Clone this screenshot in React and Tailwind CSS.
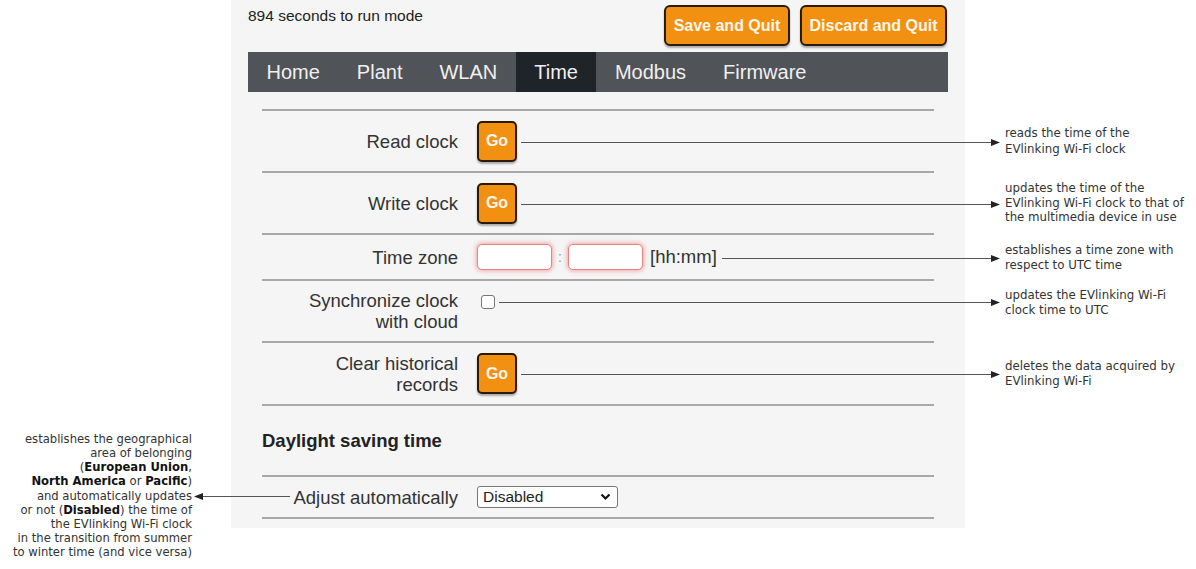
import React from "react";

function Arrow({ cls, left }) {
  return (
    <div className={"absolute flex items-center h-[8px] " + cls}>
      {left && (
        <svg width="9" height="7" viewBox="0 0 9 7" className="shrink-0">
          <polygon points="0,3.5 9,0 9,7" fill="#222" />
        </svg>
      )}
      <div className="flex-1 h-px bg-[#555]" />
      {!left && (
        <svg width="9" height="7" viewBox="0 0 9 7" className="shrink-0">
          <polygon points="9,3.5 0,0 0,7" fill="#222" />
        </svg>
      )}
    </div>
  );
}

function GoButton() {
  return (
    <div className="w-[40px] h-[41px] rounded-[5px] border-2 border-[#2a1a08] bg-[#f29111] shadow-[0_2px_2px_rgba(0,0,0,0.3)] flex items-center justify-center text-[#fff6ea] font-bold text-[16px]">
      Go
    </div>
  );
}

function Row({ h, label, children, alignTop }) {
  return (
    <div className={"flex border-b-2 border-[#a8a8a8] " + h}>
      <div className="w-[204px] pr-[8px] flex items-center justify-end text-right text-[18.5px] leading-[21px] text-[#333]">
        {label}
      </div>
      <div className={"flex-1 pl-[11px] flex " + (alignTop ? "items-start pt-[14px]" : "items-center")}>
        {children}
      </div>
    </div>
  );
}

export default function App() {
  const navItems = ["Home", "Plant", "WLAN", "Time", "Modbus", "Firmware"];
  return (
    <div className="relative w-[1196px] h-[569px] bg-white overflow-hidden font-['Liberation_Sans',Arial,sans-serif]">
      <div className="ml-[231px] w-[734px] h-[528px] bg-[#f5f5f5] px-[17px]">
        <div className="flex justify-between h-[52px]">
          <div className="pt-[7px] text-[15.5px] leading-[18px] text-[#222]">894 seconds to run mode</div>
          <div className="flex gap-[10px] pt-[5px] pr-[1px]">
            <div className="w-[126px] h-[41px] rounded-[6px] border-2 border-[#2a1a08] bg-[#f29111] shadow-[0_2px_2px_rgba(0,0,0,0.3)] flex items-center justify-center text-[#fff6ea] font-bold text-[16px]">
              Save and Quit
            </div>
            <div className="w-[147px] h-[41px] rounded-[6px] border-2 border-[#2a1a08] bg-[#f29111] shadow-[0_2px_2px_rgba(0,0,0,0.3)] flex items-center justify-center text-[#fff6ea] font-bold text-[16px]">
              Discard and Quit
            </div>
          </div>
        </div>
        <div className="h-[40px] bg-[#505358] flex">
          {navItems.map((n) => (
            <div
              key={n}
              className={
                "h-full flex items-center px-[18.5px] text-[20px] text-[#f0f0f0] " +
                (n === "Time" ? "bg-[#1f2428]" : "")
              }
            >
              {n}
            </div>
          ))}
        </div>

        <div className="ml-[14px] w-[672px] mt-[17px]">
          <div className="border-t-2 border-[#a8a8a8]">
            <Row h="h-[62px]" label="Read clock">
              <GoButton />
            </Row>
            <Row h="h-[62px]" label="Write clock">
              <GoButton />
            </Row>
            <Row h="h-[46px]" label="Time zone">
              <div className="w-[75px] h-[26px] rounded-[5px] bg-white border-[1.5px] border-[#e98383] shadow-[0_0_4px_1px_rgba(235,90,90,0.5)]" />
              <span className="w-[16px] text-center text-[14px] text-[#999]">:</span>
              <div className="w-[75px] h-[26px] rounded-[5px] bg-white border-[1.5px] border-[#e98383] shadow-[0_0_4px_1px_rgba(235,90,90,0.5)]" />
              <span className="ml-[7px] text-[18.5px] text-[#333]">[hh:mm]</span>
            </Row>
            <Row
              h="h-[62px]"
              alignTop
              label={
                <span>
                  Synchronize clock
                  <br />
                  with cloud
                </span>
              }
            >
              <div className="ml-[4px] w-[14px] h-[14px] rounded-[3px] border border-[#777] bg-white" />
            </Row>
            <Row
              h="h-[63px]"
              label={
                <span>
                  Clear historical
                  <br />
                  records
                </span>
              }
            >
              <GoButton />
            </Row>
          </div>
          <div className="h-[69px] flex items-center font-bold text-[18.5px] text-[#222]">Daylight saving time</div>
          <div className="border-t-2 border-[#a8a8a8]">
            <Row h="h-[42px]" label="Adjust automatically">
              <div className="w-[141px] h-[22px] border border-[#767676] rounded-[3px] bg-white flex items-center justify-between pl-[5px] pr-[6px] text-[15.5px] text-[#222]">
                <span>Disabled</span>
                <svg width="11" height="8" viewBox="0 0 11 8">
                  <polyline points="1.5,1.5 5.5,5.5 9.5,1.5" fill="none" stroke="#111" strokeWidth="2.2" />
                </svg>
              </div>
            </Row>
          </div>
        </div>
      </div>

      {/* annotations */}
      <Arrow cls="left-[521px] top-[138px] w-[479px]" />
      <Arrow cls="left-[521px] top-[200px] w-[479px]" />
      <Arrow cls="left-[722px] top-[254px] w-[278px]" />
      <Arrow cls="left-[499px] top-[298px] w-[501px]" />
      <Arrow cls="left-[521px] top-[370px] w-[479px]" />
      <Arrow left cls="left-[194px] top-[492px] w-[96px]" />

      <div className="absolute left-[1005px] top-[126px] text-[11.8px] leading-[15.5px] text-[#333] font-['DejaVu_Sans',Verdana,sans-serif]">
        reads the time of the
        <br />
        EVlinking Wi-Fi clock
      </div>
      <div className="absolute left-[1005px] top-[181px] text-[11.8px] leading-[14.5px] text-[#333] font-['DejaVu_Sans',Verdana,sans-serif]">
        updates the time of the
        <br />
        EVlinking Wi-Fi clock to that of
        <br />
        the multimedia device in use
      </div>
      <div className="absolute left-[1005px] top-[243px] text-[11.8px] leading-[15px] text-[#333] font-['DejaVu_Sans',Verdana,sans-serif]">
        establishes a time zone with
        <br />
        respect to UTC time
      </div>
      <div className="absolute left-[1005px] top-[288px] text-[11.8px] leading-[14.5px] text-[#333] font-['DejaVu_Sans',Verdana,sans-serif]">
        updates the EVlinking Wi-Fi
        <br />
        clock time to UTC
      </div>
      <div className="absolute left-[1005px] top-[359px] text-[11.8px] leading-[14.5px] text-[#333] font-['DejaVu_Sans',Verdana,sans-serif]">
        deletes the data acquired by
        <br />
        EVlinking Wi-Fi
      </div>
      <div className="absolute left-0 top-[432px] w-[192px] text-right text-[11.6px] leading-[14.15px] text-[#333] font-['DejaVu_Sans',Verdana,sans-serif]">
        establishes the geographical
        <br />
        area of belonging
        <br />
        (<b className="text-[#111]">European Union</b>,
        <br />
        <b className="text-[#111]">North America</b> or <b className="text-[#111]">Pacific</b>)
        <br />
        and automatically updates
        <br />
        or not (<b className="text-[#111]">Disabled</b>) the time of
        <br />
        the EVlinking Wi-Fi clock
        <br />
        in the transition from summer
        <br />
        to winter time (and vice versa)
      </div>
    </div>
  );
}
